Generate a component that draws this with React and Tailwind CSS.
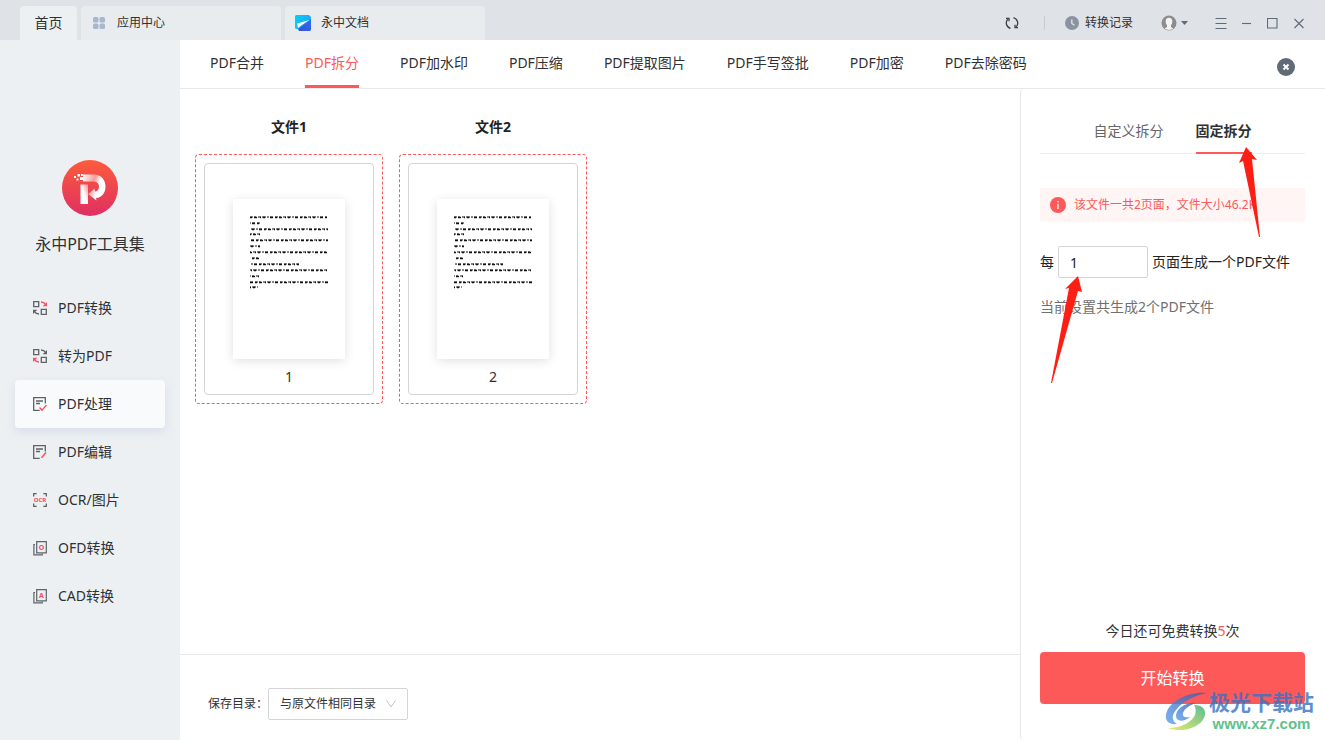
const tools = ['PDF合并', 'PDF拆分', 'PDF加水印', 'PDF压缩', 'PDF提取图片', 'PDF手写签批', 'PDF加密', 'PDF去除密码'];

const RED = '#fb4d5c';
const GRAY = '#5f6368';

// lines of the page preview: [y, width]
const previewLines = [
  [0, 77], [6, 10], [12, 78], [17, 10], [23, 78], [29, 10], [35, 78], [41, 10],
  [47, 49], [53, 78], [59, 10], [65, 78], [70, 8],
];

const SwapIcon = ({ top, bottom }) => (
  <svg width="16" height="16" viewBox="0 0 16 16" fill="none" strokeWidth="1.3">
    <path d="M1.7 1.7h5v5h-5zM9.3 9.3h5v5h-5z" stroke={GRAY} />
    <path d="M9 2c2.2 0 3.600.9 4.500 2.300" stroke={top} />
    <path d="M15 2v4.300h-4.300z" fill={top} />
    <path d="M7 14c-2.200 0-3.600-.9-4.500-2.300" stroke={bottom} />
    <path d="M1 14V9.700h4.300z" fill={bottom} />
  </svg>
);

const DocIcon = ({ mark }) => (
  <svg width="16" height="16" viewBox="0 0 16 16" fill="none" strokeWidth="1.3">
    <path d="M13.3 7.500V1.700H1.700v12.600h6M4 5h7M4 7.500h4" stroke={GRAY} />
    <path d={mark} stroke={RED} strokeWidth="1.4" />
  </svg>
);

const OcrIcon = () => (
  <svg width="16" height="16" viewBox="0 0 16 16" fill="none">
    <path d="M1.700 4.500V1.700h3M11.300 1.700h3v2.800M14.300 11.500v2.800h-3M4.700 14.300h-3v-2.800" stroke={GRAY} strokeWidth="1.3" />
    <text x="8" y="10" textAnchor="middle" fontSize="6" fontWeight="700" fill={RED}>OCR</text>
  </svg>
);

const CopyIcon = ({ letter }) => (
  <svg width="16" height="16" viewBox="0 0 16 16" fill="none">
    <path d="M4.700 1.600h9.600v11.200H4.700zM3 4.500H1.900v10.400h8.300v-1.200" stroke={GRAY} strokeWidth="1.2" />
    <text x="9.5" y="9.800" textAnchor="middle" fontSize="7" fontWeight="700" fill={RED}>{letter}</text>
  </svg>
);

const menu = [
  { label: 'PDF转换', icon: <SwapIcon top={RED} bottom={GRAY} /> },
  { label: '转为PDF', icon: <SwapIcon top={GRAY} bottom={RED} /> },
  { label: 'PDF处理', icon: <DocIcon mark="M7.5 11.500l2.500 2.600 4.500-5" />, active: true },
  { label: 'PDF编辑', icon: <DocIcon mark="M9.5 13.800l4.500-5.300" /> },
  { label: 'OCR/图片', icon: <OcrIcon /> },
  { label: 'OFD转换', icon: <CopyIcon letter="O" /> },
  { label: 'CAD转换', icon: <CopyIcon letter="A" /> },
];

const windowControls = [
  { label: '菜单', path: 'M0.500 1.500h11M0.500 6.500h11M0.500 11.500h11' },
  { label: '最小化', path: 'M1 6.500h9' },
  { label: '最大化', path: 'M0.500 1.500h9.500v9.500h-9.500z' },
  { label: '关闭', path: 'M1.500 2l9 9M10.500 2l-9 9' },
];

const Logo = () => (
  <svg width="56" height="56" viewBox="0 0 56 56">
    <defs>
      <linearGradient id="logoBg" x1="0" y1="0" x2="0" y2="1">
        <stop offset="0" stopColor="#fc5c3c" />
        <stop offset="1" stopColor="#df2f62" />
      </linearGradient>
      <linearGradient id="logoBand" x1="0" y1="0" x2="1" y2="0.4">
        <stop offset="0" stopColor="#fff" />
        <stop offset="0.5" stopColor="#f99a94" />
        <stop offset="0.75" stopColor="#fff" />
      </linearGradient>
      <linearGradient id="logoStem" x1="1" y1="0" x2="0" y2="1">
        <stop offset="0" stopColor="#f78f92" />
        <stop offset="0.5" stopColor="#fff" />
      </linearGradient>
    </defs>
    <circle cx="28" cy="28" r="28" fill="url(#logoBg)" />
    <path d="M18.500 24.500H26V44h-7.500z" fill="url(#logoStem)" />
    <path d="M21 14.500h11C39 14.500 43.500 19.500 43.500 26.500c0 6.500-3.500 11-9.500 11.500l.5 2.500-8.500-6.500 6.500-5.500.5 3c2.500-.5 4-2.300 4-4.800 0-3.700-2.500-5.200-6-5.200H21z" fill="url(#logoBand)" />
    <path d="M12 16h2v2h-2zM15.500 14h2.500v2.500h-2.500zM14.500 18.500h2v2h-2zM18 17h3v3h-3zM19 14h2v2h-2z" fill="#fff" />
  </svg>
);

const DocsLogo = () => (
  <svg width="16" height="16" viewBox="0 0 16 16">
    <defs>
      <linearGradient id="docsTop" x1="0" y1="0" x2="1" y2="0.3">
        <stop offset="0" stopColor="#00d2fa" />
        <stop offset="1" stopColor="#1fa8f6" />
      </linearGradient>
      <linearGradient id="docsBottom" x1="0" y1="1" x2="1" y2="0">
        <stop offset="0" stopColor="#3b4fd6" />
        <stop offset="1" stopColor="#2a70f0" />
      </linearGradient>
    </defs>
    <path d="M1 0h13l2 2v5L3 14H1l-1-1V1z" fill="url(#docsTop)" />
    <path d="M16 4v11l-1 1H4l-1-2z" fill="url(#docsBottom)" />
    <path d="M14.500 5L2 8.500l1 4.500 3-2.500z" fill="#fff" />
  </svg>
);

const Header = () => (
  <header className="flex h-10 shrink-0 items-end bg-[#dfe2e7] pl-5 text-[#303133]">
    <nav className="flex gap-1">
      <button className="h-[34px] w-[57px] rounded-t bg-[#ecf0f3] text-sm">首页</button>
      <button className="flex h-[34px] w-[200px] items-center gap-3 rounded-t bg-[#e8ecef] pl-3 text-xs">
        <svg width="12" height="12" viewBox="0 0 12 12" fill="#a9b6cd">
          <rect width="5.5" height="5.5" rx="1.5" />
          <rect x="6.5" width="5.5" height="5.5" rx="1.5" />
          <rect y="6.5" width="5.5" height="5.5" rx="1.5" />
          <rect x="6.5" y="6.5" width="5.5" height="5.5" rx="1.5" />
        </svg>
        应用中心
      </button>
      <button className="flex h-[34px] w-[200px] items-center gap-2.5 rounded-t bg-[#e8ecef] pl-2.5 text-xs">
        <DocsLogo />
        永中文档
      </button>
    </nav>
    <div className="ml-auto flex h-[34px] items-center pr-5 text-[#5f6b78]">
      <button aria-label="刷新" className="text-[#3a4048]">
        <svg width="14" height="14" viewBox="0 0 14 14" fill="none" stroke="currentColor" strokeWidth="1.3">
          <path d="M5.500 12.300A5.500 5.500 0 0 1 2.800 3.200M8.500 1.700a5.500 5.500 0 0 1 2.700 9.100M1 2.300h3v3M13 11.700h-3v-3" />
        </svg>
      </button>
      <span className="mr-5 ml-[25px] h-3.5 w-px bg-[#c8ccd2]" />
      <button className="flex items-center gap-1.5 text-xs text-[#303133]">
        <svg width="14" height="14" viewBox="0 0 14 14">
          <circle cx="7" cy="7" r="7" fill="#8b93a0" />
          <path d="M6.800 3.500v4l2.700 1.700" fill="none" stroke="#e4e7eb" strokeWidth="1.3" />
        </svg>
        转换记录
      </button>
      <button aria-label="账户" className="ml-7 flex items-center gap-1">
        <svg width="16" height="16" viewBox="0 0 16 16">
          <circle cx="8" cy="8" r="7.5" fill="#8d8d8f" />
          <path d="M8 2.800c2.300 0 3.300 1.500 3.300 3.600 0 1.600-.6 2.900-1.300 3.600v2l2.300 1.500A7 7 0 0 1 8 15a7 7 0 0 1-4.300-1.500L6 12v-2c-.7-.7-1.300-2-1.300-3.600 0-2.100 1-3.600 3.300-3.600z" fill="#f3f3f3" />
        </svg>
        <svg width="7" height="4" viewBox="0 0 7 4"><path d="M0 0h7L3.500 4z" fill="#5f6b78" /></svg>
      </button>
      <div className="ml-[27px] flex items-center gap-3.5">
        {windowControls.map(({ label, path }) => (
          <button key={label} aria-label={label}>
            <svg width="12" height="13" viewBox="0 0 12 13" fill="none" stroke="currentColor" strokeWidth="1.1">
              <path d={path} />
            </svg>
          </button>
        ))}
      </div>
    </div>
  </header>
);

const Sidebar = () => (
  <aside className="w-[180px] shrink-0 bg-[#ecf0f3] px-[15px] pt-[120px] text-[#303133]">
    <div className="flex flex-col items-center gap-4">
      <Logo />
      <h1 className="text-base leading-6">永中PDF工具集</h1>
    </div>
    <nav className="mt-7">
      {menu.map(({ label, icon, active }) => (
        <button
          key={label}
          className={`flex h-12 w-full items-center gap-2.5 rounded pl-[17px] text-sm ${
            active ? 'bg-[#f9fafc] shadow-[0_4px_8px_rgba(200,206,228,0.5)]' : ''
          }`}
        >
          {icon}
          {label}
        </button>
      ))}
    </nav>
  </aside>
);

const ToolTabs = () => (
  <div className="flex h-[49px] shrink-0 items-center border-b border-[#e6e8ec] px-[30px]">
    <nav className="flex h-full gap-[41px] text-sm text-[#303133]">
      {tools.map((tool) => (
        <button
          key={tool}
          className={`h-12 border-b-3 whitespace-nowrap ${
            tool === 'PDF拆分' ? 'border-[#fe5959] text-[#fe5959]' : 'border-transparent'
          }`}
        >
          {tool}
        </button>
      ))}
    </nav>
    <button aria-label="关闭文件" className="mt-1.5 ml-auto">
      <svg width="18" height="18" viewBox="0 0 18 18">
        <circle cx="9" cy="9" r="9" fill="#606b76" />
        <path d="M6.500 6.500l5 5M11.500 6.500l-5 5" stroke="#fff" strokeWidth="2" />
      </svg>
    </button>
  </div>
);

const FileCard = ({ number }) => (
  <section className="w-[188px]">
    <h2 className="text-center text-sm leading-5 font-bold text-[#222]">文件{number}</h2>
    <div className="mt-[17px] rounded border border-dashed border-[#fe5959] p-2">
      <div className="flex h-[232px] flex-col items-center rounded border border-[#d5d5d5] pt-[35px]">
        <div className="h-40 w-28 bg-white shadow-[0_2px_10px_rgba(0,0,0,0.12)]">
          <svg width="112" height="160" viewBox="0 0 112 160" stroke="#111">
            {previewLines.map(([y, width]) => (
              <g key={y} strokeDashoffset={y * 3}>
                <path d={`M17 ${y + 18}h${width}`} strokeWidth="1.2" strokeDasharray="3 1 2 2 3 1 4 1 2 1 3 2" />
                <path d={`M17 ${y + 18.5}h${width}`} strokeWidth="1.6" strokeDasharray="2 2 3 3 1 2 2 5 3 2" />
              </g>
            ))}
          </svg>
        </div>
        <span className="mt-2 text-sm leading-5 text-[#303133]">{number}</span>
      </div>
    </div>
  </section>
);

const SaveBar = () => (
  <div className="flex h-[86px] shrink-0 items-center border-t border-[#e9e9ec] pt-3 pl-7 text-xs text-[#303133]">
    <label htmlFor="saveDir" className="w-[60px]">保存目录：</label>
    <div className="relative">
      <select id="saveDir" className="h-8 w-[140px] appearance-none rounded-xs border border-[#d5d5d5] bg-white pl-[11px]">
        <option>与原文件相同目录</option>
      </select>
      <svg className="pointer-events-none absolute top-3 right-3" width="10" height="8" viewBox="0 0 10 8" fill="none" stroke="#c0c4cc">
        <path d="M0.500 0.500L5 7l4.500-6.500" />
      </svg>
    </div>
  </div>
);

const Watermark = () => (
  <div className="pointer-events-none absolute right-[11px] bottom-1.5 flex items-center gap-0.5 font-bold opacity-80">
    <svg width="42" height="40" viewBox="0 0 42 40">
      <defs>
        <linearGradient id="swirl" x1="1" y1="0" x2="0" y2="1">
          <stop offset="0" stopColor="#3b5bab" />
          <stop offset="1" stopColor="#55a0ee" />
        </linearGradient>
        <linearGradient id="leaf" x1="1" y1="0" x2="0" y2="1">
          <stop offset="0" stopColor="#2fae7a" />
          <stop offset="1" stopColor="#e6e64c" />
        </linearGradient>
      </defs>
      <path d="M42 1C24-1 3 9 1 23c-1 6 3 10 11 9-5-3-6-8-1-14C18 9 30 3 42 1z" fill="url(#swirl)" />
      <path d="M31 11c-10-1-20 5-20 13 0 6 8 6 14 1-5 1-8 0-7-4 2-5 7-8 13-10z" fill="url(#swirl)" />
      <path d="M29 13c8 0 12 4 11 10C38 34 19 42 3 36c13 0 24-6 27-13 1-4 1-7-1-10z" fill="url(#leaf)" />
    </svg>
    <div>
      <p className="text-[21px] leading-6 text-[#3872c4]">极光下载站</p>
      <p className="text-center font-[Liberation_Sans] text-[15px] leading-5 text-[#37b171]">www.xz7.com</p>
    </div>
  </div>
);

const Arrows = () => (
  <svg className="pointer-events-none absolute top-0 left-0" width="304" height="320" viewBox="0 0 304 320" fill="#fe1f14">
    <path d="M225 58L236 71L231 70L239 148H238L222 72L218 74z" />
    <path d="M57 187L61 203L57 202L31 294H30L48 199L44 200z" />
  </svg>
);

const SplitPanel = () => (
  <aside className="relative flex w-[305px] shrink-0 flex-col rounded-l border-l border-[#e6e8ec] pr-5 pl-[19px]">
    <nav className="mt-5 flex h-[45px] justify-center gap-8 border-b border-[#eee] text-sm">
      <button className="h-[45px] border-b-2 border-transparent text-[#666]">自定义拆分</button>
      <button className="h-[45px] border-b-2 border-[#fe5959] font-bold text-[#303133]">固定拆分</button>
    </nav>
    <p className="mt-[34px] flex h-[34px] items-center gap-2 rounded-xs bg-[#fff5f5] pl-2.5 text-xs text-[#fe5959]">
      <svg width="16" height="16" viewBox="0 0 16 16">
        <circle cx="8" cy="8" r="8" fill="#fe5959" />
        <path d="M8 4v1.500M8 7v5" stroke="#fff" strokeWidth="1.3" />
      </svg>
      该文件一共2页面，文件大小46.2K
    </p>
    <div className="mt-6 flex items-center gap-1 text-sm whitespace-nowrap text-[#222]">
      <label htmlFor="pages">每</label>
      <input id="pages" defaultValue="1" className="h-8 w-[90px] rounded-xs border border-[#d5d5d5] pl-[11px]" />
      <span>页面生成一个PDF文件</span>
    </div>
    <p className="mt-[19px] text-sm leading-5 text-[#707070]">当前设置共生成2个PDF文件</p>
    <p className="mt-auto text-center text-sm leading-5 text-[#303133]">
      今日还可免费转换<span className="text-[#fe5959]">5</span>次
    </p>
    <button className="mt-[11px] mb-9 h-[52px] shrink-0 rounded bg-[#fe5959] text-base text-white">开始转换</button>
    <Arrows />
    <Watermark />
  </aside>
);

const App = () => (
  <div className="flex min-h-screen flex-col bg-white font-['Noto_Sans','Noto_Sans_CJK_SC',sans-serif]">
    <Header />
    <div className="flex flex-1">
      <Sidebar />
      <div className="flex min-w-0 flex-1 flex-col">
        <ToolTabs />
        <div className="flex flex-1">
          <main className="flex min-w-0 flex-1 flex-col">
            <div className="flex flex-1 gap-4 px-[15px] pt-7">
              <FileCard number={1} />
              <FileCard number={2} />
            </div>
            <SaveBar />
          </main>
          <SplitPanel />
        </div>
      </div>
    </div>
  </div>
);

export default App;
